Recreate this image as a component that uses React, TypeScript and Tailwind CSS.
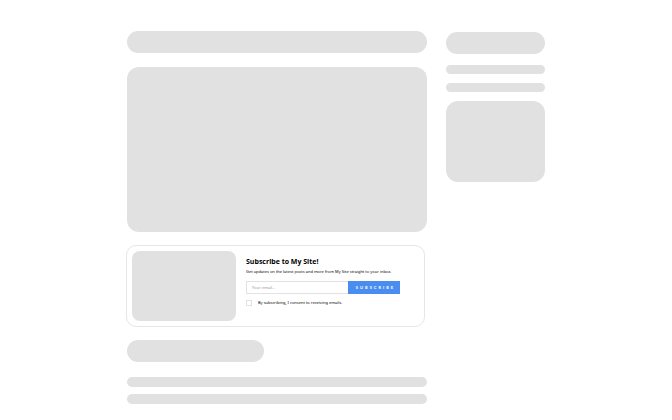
import React from "react";

function Placeholder({ className }: { className: string }) {
  return <div aria-hidden="true" className={`bg-[#e1e1e1] ${className}`} />;
}

function SubscribeCard() {
  return (
    <section className="mt-[13px] mr-[2px] -ml-px flex rounded-[10px] border border-[#e6e6e6] bg-white p-[5px]">
      <Placeholder className="h-[70px] w-[104px] shrink-0 rounded-[8px]" />
      <form
        className="ml-[10px] min-w-0 flex-1 pt-[6px] font-['Noto_Sans',sans-serif] text-[4px] leading-[6px] text-black"
        onSubmit={(e) => e.preventDefault()}
      >
        <h2 className="font-['Open_Sans',sans-serif] text-[7px] leading-[10px] font-bold whitespace-nowrap">
          Subscribe to My Site!
        </h2>
        <p className="mt-[2px] whitespace-nowrap">
          Get updates on the latest posts and more from My Site straight to your inbox.
        </p>
        <div className="mt-[6px] flex h-[13px] w-[154px]">
          <input
            type="email"
            aria-label="Your email"
            placeholder="Your email..."
            className="min-w-0 flex-1 border border-r-0 border-[#e2e2e2] bg-white px-[5px] outline-none placeholder:text-[#999999]"
          />
          <button
            type="submit"
            className="w-[52px] bg-[#4a8df0] pl-[3px] text-center font-['Lato',sans-serif] font-bold tracking-[2px] text-white"
          >
            SUBSCRIBE
          </button>
        </div>
        <label className="mt-[6px] flex items-center gap-[6px] whitespace-nowrap">
          <input
            type="checkbox"
            className="size-[6px] shrink-0 appearance-none border border-[#e2e2e2] bg-white checked:bg-[#4a8df0]"
          />
          By subscribing, I consent to receiving emails.
        </label>
      </form>
    </section>
  );
}

export default function App() {
  return (
    <div className="min-h-screen bg-white pb-4 font-['Lato',sans-serif]">
      <div className="mx-auto grid w-full max-w-[418px] grid-cols-[minmax(0,1fr)_99px] gap-[19px]">
        <main className="pt-[31px]">
          <Placeholder className="h-[22px] rounded-full" />
          <Placeholder className="mt-[14px] h-[165px] rounded-xl" />
          <SubscribeCard />
          <Placeholder className="mt-[13px] h-[22px] w-[137px] rounded-full" />
          <Placeholder className="mt-[15px] h-[10px] rounded-full" />
          <Placeholder className="mt-[7px] h-[10px] rounded-full" />
        </main>
        <aside className="pt-[32px]">
          <Placeholder className="h-[22px] rounded-full" />
          <Placeholder className="mt-[11px] h-[9px] rounded-full" />
          <Placeholder className="mt-[9px] h-[9px] rounded-full" />
          <Placeholder className="mt-[9px] h-[81px] rounded-xl" />
        </aside>
      </div>
    </div>
  );
}
